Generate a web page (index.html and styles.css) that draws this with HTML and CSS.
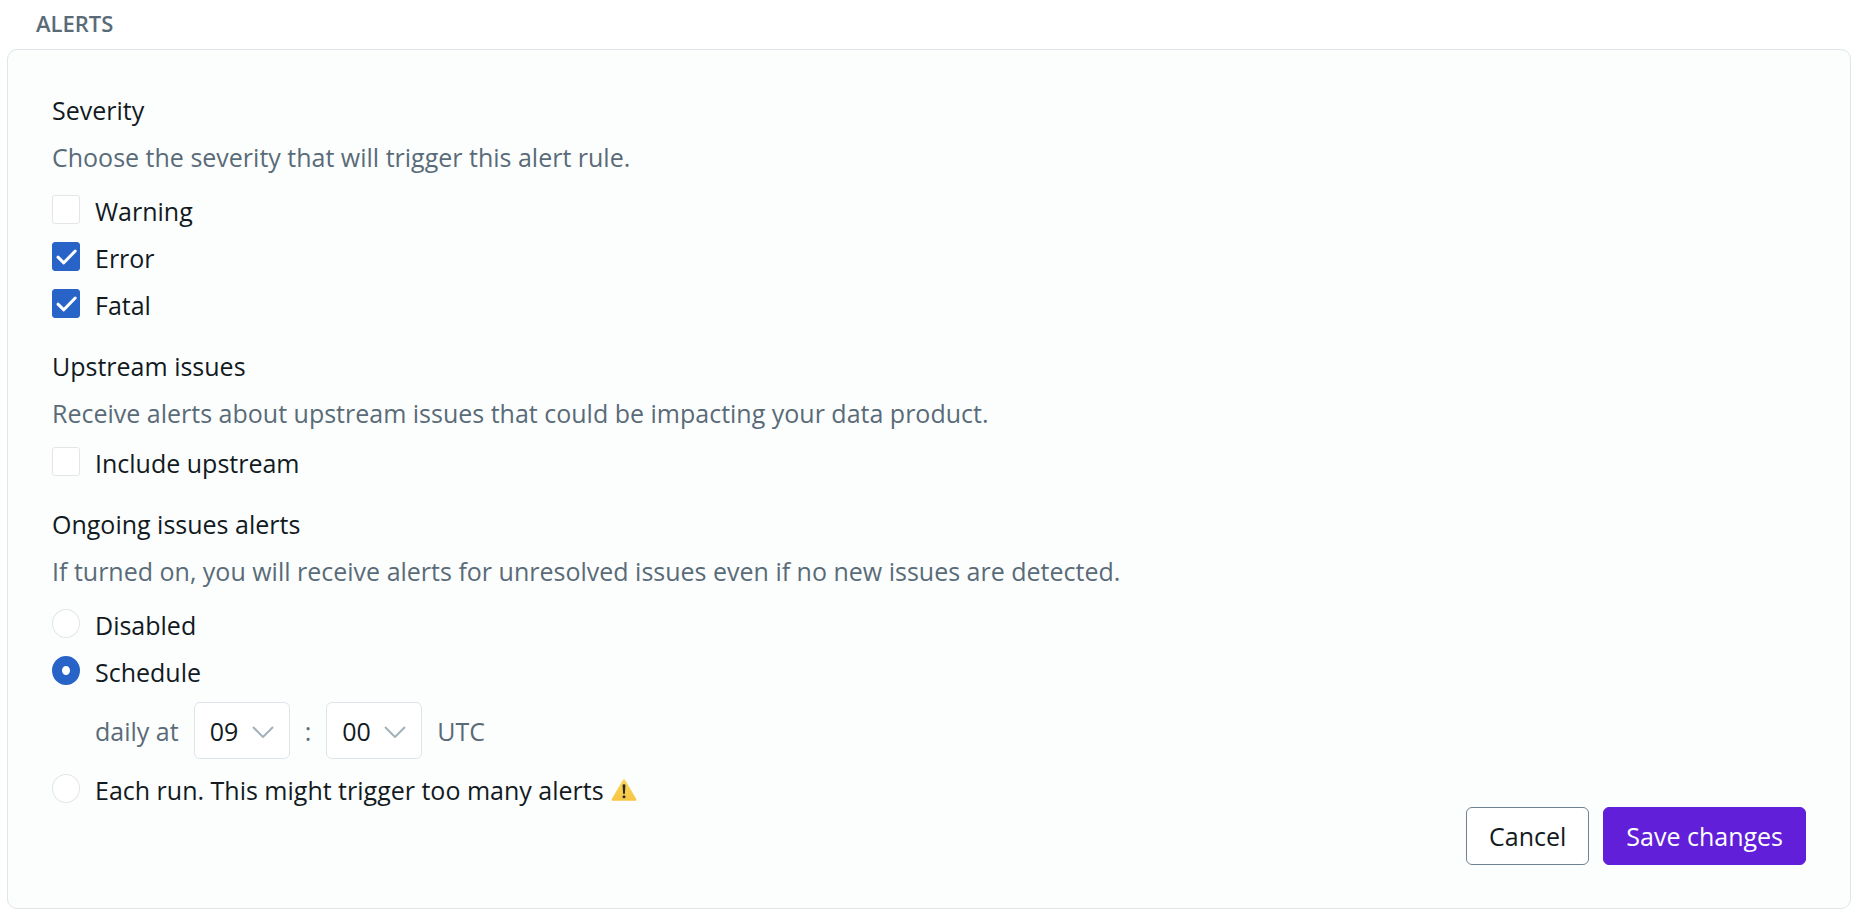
FILE: index.html
```html
<!DOCTYPE html>
<html lang="en">
<head>
  <meta charset="UTF-8" />
  <meta name="viewport" content="width=device-width, initial-scale=1" />
  <title>Alerts</title>
  <link rel="stylesheet" href="styles.css">
</head>

<body>
  <h2 class="title">ALERTS</h2>

  <form class="card">
    <fieldset class="group">
      <legend>Severity</legend>
      <p class="hint">Choose the severity that will trigger this alert rule.</p>
      <div class="options">
        <label class="option">
          <span class="check">
            <input type="checkbox" name="warning" />
            <svg viewBox="0 0 28 29"><path d="M6 15.2l5.8 5.6L23.2 9" /></svg>
          </span>
          Warning
        </label>
        <label class="option">
          <span class="check">
            <input type="checkbox" name="error" checked />
            <svg viewBox="0 0 28 29"><path d="M6 15.2l5.8 5.6L23.2 9" /></svg>
          </span>
          Error
        </label>
        <label class="option">
          <span class="check">
            <input type="checkbox" name="fatal" checked />
            <svg viewBox="0 0 28 29"><path d="M6 15.2l5.8 5.6L23.2 9" /></svg>
          </span>
          Fatal
        </label>
      </div>
    </fieldset>

    <fieldset class="group">
      <legend>Upstream issues</legend>
      <p class="hint">Receive alerts about upstream issues that could be impacting your data product.</p>
      <div class="options single">
        <label class="option">
          <span class="check">
            <input type="checkbox" name="upstream" />
            <svg viewBox="0 0 28 29"><path d="M6 15.2l5.8 5.6L23.2 9" /></svg>
          </span>
          Include upstream
        </label>
      </div>
    </fieldset>

    <fieldset class="group">
      <legend>Ongoing issues alerts</legend>
      <p class="hint">If turned on, you will receive alerts for unresolved issues even if no new issues are detected.</p>
      <div class="options">
        <label class="option">
          <input type="radio" name="ongoing" value="disabled" />
          Disabled
        </label>
        <label class="option">
          <input type="radio" name="ongoing" value="schedule" checked />
          Schedule
        </label>
        <div class="schedule">
          <label for="hour">daily at</label>
          <span class="select">
            <select id="hour">
              <option>08</option>
              <option selected>09</option>
              <option>10</option>
            </select>
            <svg viewBox="0 0 22 12"><path d="M1 1l10 10L21 1" /></svg>
          </span>
          <span>:</span>
          <span class="select">
            <select id="minute" aria-label="minute">
              <option selected>00</option>
              <option>15</option>
              <option>30</option>
              <option>45</option>
            </select>
            <svg viewBox="0 0 22 12"><path d="M1 1l10 10L21 1" /></svg>
          </span>
          <span>UTC</span>
        </div>
        <label class="option">
          <input type="radio" name="ongoing" value="each" />
          <span>Each run. This might trigger too many alerts</span>
          <svg class="warning" viewBox="0 0 26 22">
            <defs>
              <linearGradient id="sun" x1="0" y1="0" x2="0" y2="1">
                <stop offset="0" stop-color="#fad65c" />
                <stop offset="1" stop-color="#f6c544" />
              </linearGradient>
            </defs>
            <path class="sign" d="M11.8 1.1q1.2-1.8 2.4 0l11 19q.7 1.6-1 1.7H1.8q-1.7-.1-1-1.7z" />
            <path class="mark" d="M11.6 6.6q0-1.3 1.4-1.3t1.4 1.3l-.5 7.6q-.1.9-.9.9t-.9-.9z" />
            <circle class="mark" cx="13" cy="17.8" r="1.5" />
          </svg>
        </label>
      </div>
    </fieldset>

    <div class="actions">
      <button type="button" class="cancel">Cancel</button>
      <button type="submit" class="save">Save changes</button>
    </div>
  </form>
</body>
</html>
```
FILE: styles.css
```css
* {
  box-sizing: border-box;
}

body {
  margin: 0;
  padding: 8px 11px 6px 7px;
  background: #ffffff;
  color: #121a1e;
  font-family: "Open Sans", "Noto Sans", sans-serif;
  font-size: 25px;
  line-height: 34px;
}

.title {
  margin: 0 0 11px;
  padding-left: 29px;
  color: #5a6b78;
  font-size: 22px;
  font-weight: 600;
  line-height: 30px;
}

.card {
  padding: 43px 44px;
  background: #fcfefe;
  border: 1px solid #dfe5e8;
  border-radius: 10px;
}

.group {
  margin: 0 0 27px;
  padding: 0;
  border: none;
}

.group:nth-of-type(3) {
  margin-bottom: 0;
}

legend {
  padding: 0;
}

.hint {
  margin: 13px 0 20px;
  color: #5a6b78;
}

.options {
  display: flex;
  flex-direction: column;
  align-items: flex-start;
  gap: 13px;
}

.options.single {
  margin-top: -4px;
}

.option {
  display: flex;
  align-items: center;
  gap: 15px;
  cursor: pointer;
}

.check,
.select {
  display: grid;
  align-items: center;
}

.check > *,
.select > * {
  grid-area: 1 / 1;
}

.check svg {
  width: 28px;
  height: 29px;
  margin-bottom: 3px;
  fill: none;
  stroke: #ffffff;
  stroke-width: 3;
  stroke-linecap: round;
  stroke-linejoin: round;
  visibility: hidden;
  pointer-events: none;
}

.check input:checked + svg {
  visibility: visible;
}

input {
  appearance: none;
  width: 28px;
  height: 29px;
  margin: 0 0 3px;
  background: #ffffff;
  border: 1px solid #e2e6e8;
  border-radius: 3px;
  cursor: pointer;
}

input[type="radio"] {
  border-radius: 50%;
}

input:checked {
  background: #2864c8;
  border-color: #2864c8;
}

input[type="radio"]:checked {
  background: #ffffff;
  border-width: 10px;
}

.schedule {
  display: flex;
  align-items: center;
  gap: 15px;
  margin-bottom: 1px;
  padding-left: 43px;
  color: #5a6b78;
}

select {
  appearance: none;
  width: 96px;
  height: 57px;
  padding: 0 15px;
  background: #ffffff;
  border: 1px solid #dde5ea;
  border-radius: 6px;
  color: #121a1e;
  font: inherit;
  cursor: pointer;
}

.select svg {
  justify-self: end;
  width: 22px;
  height: 12px;
  margin: 3px 16px 0 0;
  fill: none;
  stroke: #a3b1bb;
  stroke-width: 2;
  pointer-events: none;
}

.warning {
  width: 26px;
  height: 22px;
  margin-left: -8px;
}

.warning .sign {
  fill: url(#sun);
}

.warning .mark {
  fill: #2b2a20;
}

.actions {
  display: flex;
  justify-content: flex-end;
  gap: 14px;
}

button {
  height: 58px;
  padding: 0 22px;
  border: 1px solid #6f8291;
  border-radius: 6px;
  background: #ffffff;
  color: #121a1e;
  font: inherit;
  cursor: pointer;
}

.save {
  background: #611fda;
  border-color: #611fda;
  color: #ffffff;
}
```
